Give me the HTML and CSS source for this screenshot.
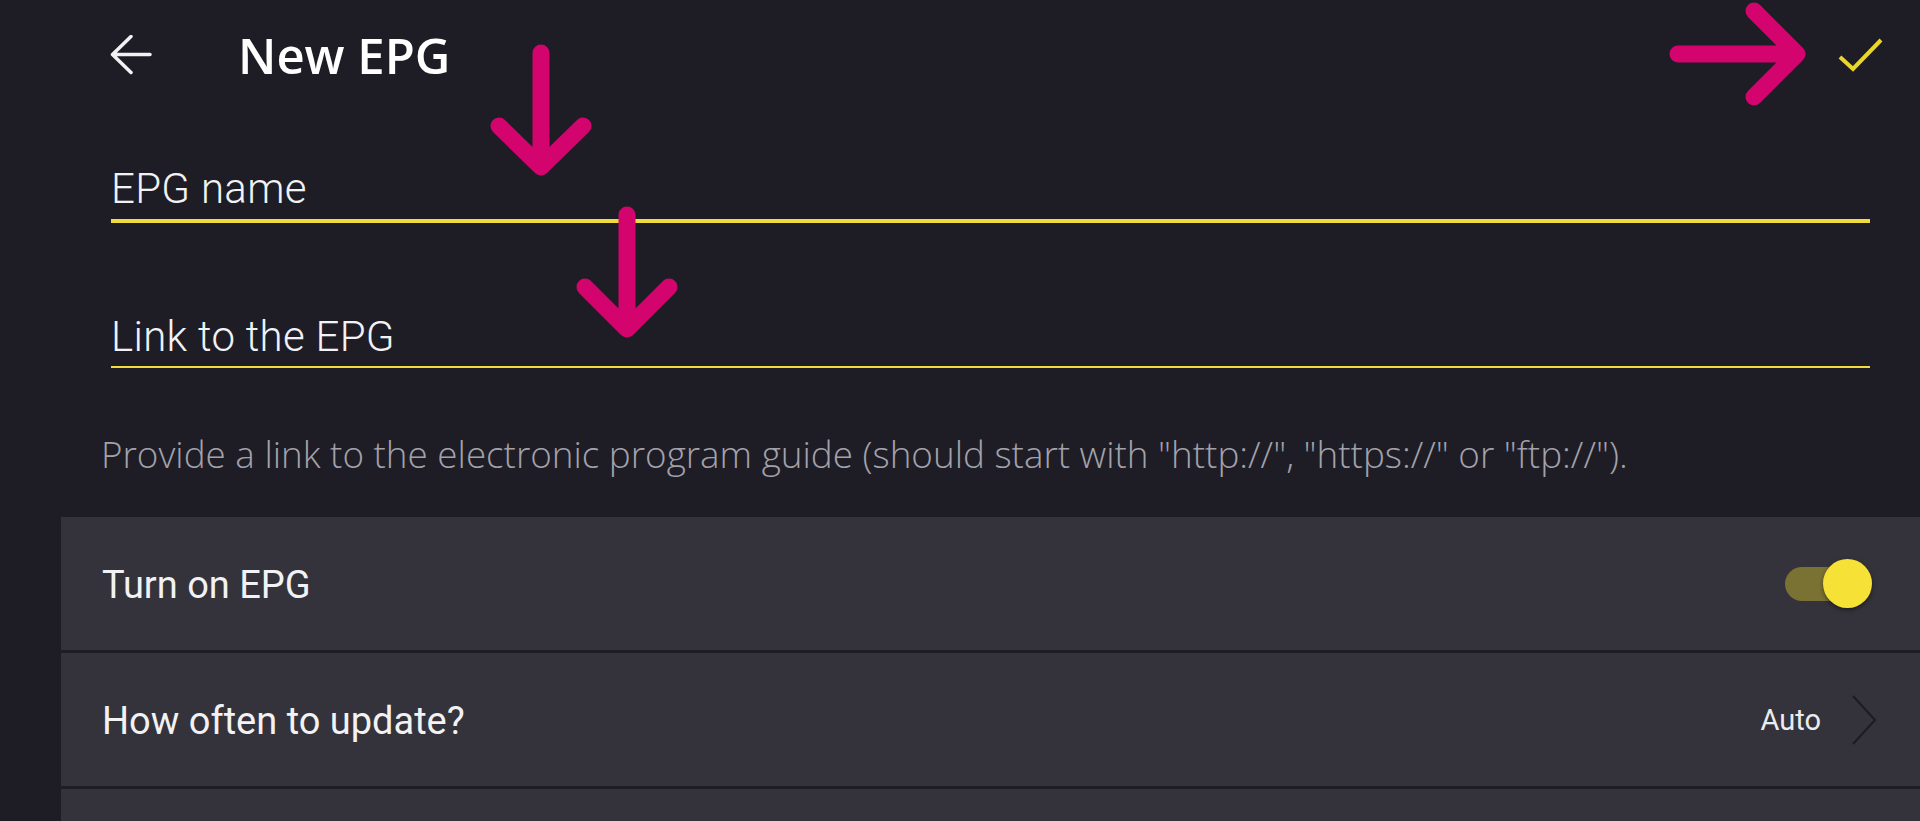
FILE: index.html
```html
<!DOCTYPE html>
<html lang="en">
<head>
    <meta charset="UTF-8">
    <meta name="viewport" content="width=device-width, initial-scale=1.0">
    <title>New EPG</title>
    <link rel="stylesheet" href="styles.css">
</head>
<body>
    <div class="top-bar">
        <svg class="back-icon" width="42" height="40" viewBox="0 0 42 40">
            <path d="M40 19.5 H3 M21 1.5 L2.5 19.5 L21 37.5" fill="none" stroke="#f2f2f4" stroke-width="3.5" stroke-linecap="round" stroke-linejoin="round"/>
        </svg>
        <div class="page-title">New EPG</div>
        <svg class="done-icon" width="46" height="36" viewBox="0 0 46 36">
            <path d="M2 20 L15 32 L43 3" fill="none" stroke="#e9d62b" stroke-width="4"/>
        </svg>
    </div>

    <div class="fields">
        <div class="field field-active">EPG name</div>
        <div class="field">Link to the EPG</div>
    </div>

    <div class="hint">Provide a link to the electronic program guide (should start with "http://", "https://" or "ftp://").</div>

    <div class="settings">
        <div class="setting-row">
            <div class="setting-label">Turn on EPG</div>
            <div class="toggle">
                <div class="toggle-track"></div>
                <div class="toggle-thumb"></div>
            </div>
        </div>
        <div class="setting-row">
            <div class="setting-label">How often to update?</div>
            <div class="setting-value">
                <span>Auto</span>
                <svg width="26" height="50" viewBox="0 0 26 50">
                    <path d="M2 1 L24 25 L2 49" fill="none" stroke="#1d1c23" stroke-width="2.2"/>
                </svg>
            </div>
        </div>
        <div class="setting-row setting-row-cut"></div>
    </div>

    <!-- annotation arrows drawn over the screenshot -->
    <svg class="marks" width="1920" height="821" viewBox="0 0 1920 821">
        <g fill="none" stroke="#d4046e" stroke-width="17" stroke-linecap="round" stroke-linejoin="round">
            <path d="M541 53 V167 M499 126 L541 167 L583 126"/>
            <path d="M627 215 V329 M585 287 L627 329 L669 287"/>
            <path d="M1678 54 H1797 M1754 11 L1797 54 L1754 97"/>
        </g>
    </svg>
</body>
</html>
```

FILE: styles.css
```css
html, body {
    margin: 0;
    height: 100%;
    overflow: hidden;
    font-family: 'Roboto', sans-serif;
    background-color: #1e1d25;
    color: #f2f2f4;
}

.top-bar {
    display: flex;
    align-items: center;
    height: 110px;
    padding: 0 36px 0 110px;
}

.page-title {
    margin-left: 86px;
    font-family: 'Open Sans', sans-serif;
    font-size: 49px;
    font-weight: 600;
    color: #fff;
}

.done-icon {
    margin-left: auto;
}

.fields {
    padding: 0 50px 0 111px;
}

.field {
    margin-top: 89px;
    padding-bottom: 4px;
    font-size: 42px;
    font-weight: 300;
    line-height: 50px;
    letter-spacing: 0.3px;
    border-bottom: 2px solid #f1dc3e;
}

.field-active {
    margin-top: 54px;
    padding-bottom: 5px;
    border-bottom-width: 4px;
}

.hint {
    margin-top: 64px;
    padding-left: 101px;
    font-family: 'Open Sans', sans-serif;
    font-size: 36.8px;
    font-weight: 300;
    line-height: 44px;
    color: #a3a2ab;
}

.settings {
    margin: 41px 0 0 61px;
}

.setting-row {
    display: flex;
    align-items: center;
    justify-content: space-between;
    height: 133px;
    padding: 0 43px 0 41px;
    margin-bottom: 3px;
    background-color: #34333b;
}

.setting-row-cut {
    height: 33px;
    margin-bottom: 0;
}

.setting-label {
    font-size: 38px;
    padding-top: 3px;
}

.toggle {
    position: relative;
    width: 87px;
    height: 49px;
    margin-right: 5px;
}

.toggle-track {
    position: absolute;
    left: 0;
    top: 8px;
    width: 76px;
    height: 34px;
    border-radius: 17px;
    background-color: #7a7233;
}

.toggle-thumb {
    position: absolute;
    right: 0;
    top: 0;
    width: 49px;
    height: 49px;
    border-radius: 50%;
    background-color: #f6e137;
    box-shadow: 0 2px 4px rgba(0, 0, 0, 0.45);
}

.setting-value {
    display: flex;
    align-items: center;
    gap: 30px;
    font-size: 29px;
    color: #ececee;
}

.marks {
    position: absolute;
    top: 0;
    left: 0;
    pointer-events: none;
}
```
